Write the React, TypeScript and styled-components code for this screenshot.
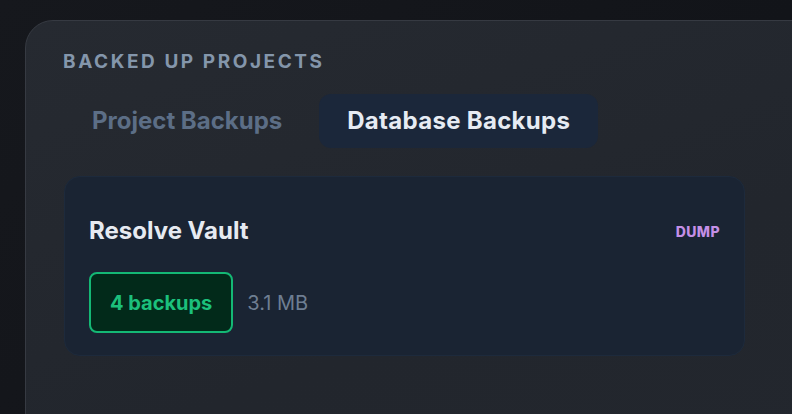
import React from 'react'
import styled, { createGlobalStyle } from 'styled-components'

const GlobalStyle = createGlobalStyle`
  html, body {
    margin: 0;
    padding: 0;
    height: 100%;
    overflow: hidden;
    background: linear-gradient(135deg, #16181d 0%, #101217 100%);
    font-family: Inter, 'Noto Sans', sans-serif;
  }
`

const Page = styled.div`
  width: 792px;
  height: 414px;
  padding: 20px 0 0 25px;
  box-sizing: border-box;
  overflow: hidden;
`

const Panel = styled.section`
  width: 820px;
  min-height: 460px;
  box-sizing: border-box;
  padding: 30px 38px;
  background: linear-gradient(160deg, #262a31 0%, #22262d 60%, #23272e 100%);
  border: 1px solid #363a42;
  border-radius: 28px;
`

const Heading = styled.h2`
  margin: 0 0 21px -1px;
  font-size: 19px;
  line-height: 22px;
  font-weight: 700;
  letter-spacing: 0.135em;
  color: #8496ab;
  text-transform: uppercase;
`

const Tabs = styled.div`
  display: flex;
  gap: 9px;
  margin-bottom: 28px;
`

const Tab = styled.button<{ $active?: boolean }>`
  border: none;
  padding: 13px 28px;
  border-radius: 12px;
  font-family: inherit;
  font-size: 24px;
  line-height: 28px;
  font-weight: 700;
  letter-spacing: ${(p) => (p.$active ? '0.3px' : '0')};
  background: ${(p) => (p.$active ? '#1b273a' : 'transparent')};
  color: ${(p) => (p.$active ? '#e6ebf3' : '#5c6e86')};
  cursor: pointer;
`

const Card = styled.div`
  width: 681px;
  box-sizing: border-box;
  padding: 39px 24px 22px 24px;
  background: #1a2433;
  border: 1px solid #1d2a3c;
  border-radius: 16px;
`

const CardHeader = styled.div`
  display: flex;
  justify-content: space-between;
  align-items: center;
  margin-bottom: 26px;
`

const ProjectName = styled.h3`
  margin: 0;
  font-size: 24px;
  line-height: 30px;
  font-weight: 700;
  color: #e6eaf1;
`

const TypeTag = styled.span`
  font-size: 14px;
  font-weight: 800;
  letter-spacing: 0.03em;
  color: #c48fe6;
`

const Meta = styled.div`
  display: flex;
  align-items: center;
  gap: 14px;
`

const CountBadge = styled.span`
  display: inline-block;
  padding: 16.5px 19px;
  border: 2px solid #14b875;
  border-radius: 8px;
  background: #022a1a;
  color: #1cc07c;
  font-size: 20px;
  line-height: 24px;
  font-weight: 700;
`

const Size = styled.span`
  font-size: 20px;
  color: #6e7e92;
`

export default function App() {
  return (
    <>
      <GlobalStyle />
      <Page>
        <Panel>
          <Heading>Backed up projects</Heading>
          <Tabs>
            <Tab>Project Backups</Tab>
            <Tab $active>Database Backups</Tab>
          </Tabs>
          <Card>
            <CardHeader>
              <ProjectName>Resolve Vault</ProjectName>
              <TypeTag>DUMP</TypeTag>
            </CardHeader>
            <Meta>
              <CountBadge>4 backups</CountBadge>
              <Size>3.1 MB</Size>
            </Meta>
          </Card>
        </Panel>
      </Page>
    </>
  )
}
